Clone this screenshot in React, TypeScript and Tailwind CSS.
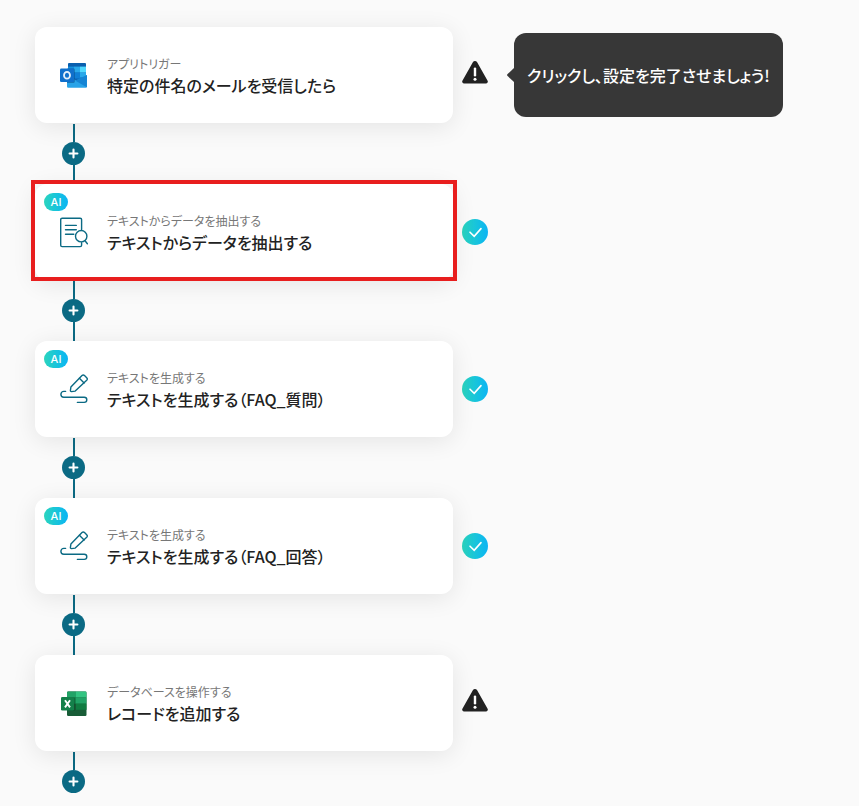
import React from 'react';

type IconName = 'outlook' | 'extract' | 'generate' | 'excel';

interface Step {
  id: number;
  icon: IconName;
  category: string;
  title: string;
  ai?: boolean;
  done?: boolean;
  selected?: boolean;
  hint?: string;
}

const steps: Step[] = [
  { id: 1, icon: 'outlook', category: 'アプリトリガー', title: '特定の件名のメールを受信したら', hint: 'クリックし、設定を完了させましょう!' },
  { id: 2, icon: 'extract', category: 'テキストからデータを抽出する', title: 'テキストからデータを抽出する', ai: true, done: true, selected: true },
  { id: 3, icon: 'generate', category: 'テキストを生成する', title: 'テキストを生成する（FAQ_質問）', ai: true, done: true },
  { id: 4, icon: 'generate', category: 'テキストを生成する', title: 'テキストを生成する（FAQ_回答）', ai: true, done: true },
  { id: 5, icon: 'excel', category: 'データベースを操作する', title: 'レコードを追加する' },
];

function OutlookIcon() {
  return (
    <svg width="28" height="28" viewBox="0 -0.6 28 28" className="shrink-0" aria-hidden="true">
      <rect x="8" y="1.5" width="18" height="17" rx="1" fill="#0a5fae" />
      <path d="M8 5h6v6H8z" fill="#1490df" />
      <path d="M14 5h6v6h-6z" fill="#28a8ea" />
      <path d="M20 5h6v6h-6z" fill="#50d9ff" />
      <path d="M8 11h6v6H8z" fill="#0364b8" />
      <path d="M14 11h6v6h-6z" fill="#0f7fd6" />
      <path d="M20 11h6v5h-6z" fill="#28a8ea" />
      <path d="M7 14l10.5 5.5L27 13.5V25a1.2 1.2 0 0 1-1.2 1.2H8.2A1.2 1.2 0 0 1 7 25z" fill="#28a3e8" />
      <path d="M15 19l11.8 6.6L27 13.5z" fill="#1584d4" />
      <path d="M7 7h6.5a1.4 1.4 0 0 1 1.4 1.4V20a1.4 1.4 0 0 1-1.4 1.4H7z" fill="#064a85" opacity=".5" />
      <rect x="0" y="7" width="14" height="13.5" rx="1.3" fill="#1070cc" />
      <ellipse cx="7" cy="13.7" rx="3" ry="3.4" fill="none" stroke="#e6f1fb" strokeWidth="1.8" />
    </svg>
  );
}

function ExcelIcon() {
  return (
    <svg width="28" height="28" viewBox="0 -1 28 28" className="shrink-0" aria-hidden="true">
      <rect x="7" y="1.5" width="19.5" height="24.5" rx="1.2" fill="#185c37" />
      <path d="M7 2.7a1.2 1.2 0 0 1 1.2-1.2H16v6H7z" fill="#21a366" />
      <path d="M16 1.5h9.3a1.2 1.2 0 0 1 1.2 1.2v4.8H16z" fill="#33c481" />
      <path d="M7 7.5h9v6.2H7z" fill="#169154" />
      <path d="M16 7.5h10.5v6.2H16z" fill="#21a366" />
      <path d="M16 13.7h10.5v6.1H16z" fill="#107c41" />
      <path d="M7 7.5h7a1.3 1.3 0 0 1 1.3 1.3v11a1.3 1.3 0 0 1-1.3 1.3H7z" fill="#0b4a29" opacity=".5" />
      <rect x="1" y="7" width="13" height="13.5" rx="1.3" fill="#14804a" />
      <path d="M5 10.2l5 7.2M10 10.2l-5 7.2" stroke="#fff" strokeWidth="1.9" fill="none" />
    </svg>
  );
}

function ExtractIcon() {
  return (
    <svg width="28" height="32" viewBox="0 -1.4 28 32" className="shrink-0" fill="none" stroke="#0b6a84" strokeWidth="1.4" strokeLinecap="round" aria-hidden="true">
      <path d="M21.6 12V2.2A1.4 1.4 0 0 0 20.2.8H2.1A1.4 1.4 0 0 0 .7 2.2v25.6a1.4 1.4 0 0 0 1.4 1.4h18.1a1.4 1.4 0 0 0 1.4-1.4v-2.4" />
      <path d="M5.5 8h10.8M5.5 12.3h10.8M5.5 16.8h8.3" />
      <circle cx="21.2" cy="18.8" r="5.7" />
      <path d="M25.2 23.6l2.2 2.8" />
    </svg>
  );
}

function GenerateIcon() {
  return (
    <svg width="28" height="30" viewBox="0 0 28 30" className="shrink-0" fill="none" stroke="#0b6a84" strokeWidth="1.4" strokeLinecap="round" strokeLinejoin="round" aria-hidden="true">
      <path d="M10.9 13L22 1.5a1.8 1.8 0 0 1 2.5 0l2.2 2.2a1.8 1.8 0 0 1 0 2.5L15.2 17.1l-3.8.5a.9.9 0 0 1-1-1z" />
      <path d="M19.4 4.3l4.7 4.6" />
      <path d="M5.6 17.4H3.8a2.9 2.9 0 0 0 0 5.8h20.4a2.6 2.6 0 0 1 0 5.2h-6.8" />
    </svg>
  );
}

function StepIcon({ name }: { name: IconName }) {
  if (name === 'outlook') return <OutlookIcon />;
  if (name === 'excel') return <ExcelIcon />;
  if (name === 'extract') return <ExtractIcon />;
  return <GenerateIcon />;
}

function Status({ done }: { done?: boolean }) {
  if (done) {
    return (
      <span className="flex size-[26px] shrink-0 items-center justify-center rounded-full bg-linear-to-r from-[#2bd4bd] to-[#0db4f4]">
        <svg width="26" height="26" viewBox="0 0 26 26" fill="none" role="img" aria-label="設定済み">
          <path d="M8 13.2l4.2 4.2 6.8-7.8" stroke="#fff" strokeWidth="1.6" strokeLinecap="round" />
        </svg>
      </span>
    );
  }
  return (
    <svg width="26" height="30" viewBox="0 0 26 30" className="shrink-0" role="img" aria-label="未設定">
      <path d="M11 2.1a2.4 2.4 0 0 1 4 0l10.6 18.6a1.9 1.9 0 0 1-1.7 2.8H2.1a1.9 1.9 0 0 1-1.7-2.8z" fill="#222" />
      <path d="M13 8.6v6.6" stroke="#fff" strokeWidth="2.4" strokeLinecap="round" />
      <circle cx="13" cy="19.2" r="1.5" fill="#fff" />
    </svg>
  );
}

function Connector({ last }: { last: boolean }) {
  return (
    <div className="ml-[27px] flex w-[23px] flex-col items-center pt-px">
      <div className="h-[18px] w-0.5 bg-[#0b6a84]" />
      <button
        type="button"
        aria-label="ステップを追加"
        className="flex size-[23px] items-center justify-center rounded-full bg-[#0b6a84]"
      >
        <svg width="11" height="11" viewBox="0 0 11 11" aria-hidden="true">
          <path d="M5.5 1.6v7.8M1.6 5.5h7.8" stroke="#fff" strokeWidth="2.1" strokeLinecap="round" />
        </svg>
      </button>
      {!last && <div className="h-[19px] w-0.5 bg-[#0b6a84]" />}
    </div>
  );
}

function StepCard({ step }: { step: Step }) {
  return (
    <div className="flex items-center gap-[9px]">
      <button
        type="button"
        className="relative flex h-24 min-w-0 basis-[418px] items-center gap-[19px] rounded-xl bg-white pl-[25px] pr-4 text-left shadow-[0_4px_24px_rgba(0,0,0,0.09)]"
      >
        {step.ai && (
          <span className="absolute left-[9px] top-[9px] flex h-[18px] w-6 items-center justify-center rounded-full bg-linear-to-r from-[#2bd4bd] to-[#0db4f4] font-[Inter,sans-serif] text-[11px] font-medium leading-none text-white">
            AI
          </span>
        )}
        <StepIcon name={step.icon} />
        <span className="flex min-w-0 flex-col">
          <span className="text-xs leading-5 text-[#777]">{step.category}</span>
          <span className="text-base font-medium leading-[22px] text-[#222]">{step.title}</span>
        </span>
        {step.selected && <span className="absolute -inset-x-1 -top-1 -bottom-px border-4 border-[#e81e1e]" />}
      </button>
      <Status done={step.done} />
      {step.hint && (
        <div role="tooltip" className="relative ml-[17px] flex h-[84px] items-center rounded-xl bg-[#373737] px-[13px] text-base font-medium text-white">
          <svg width="7" height="14" viewBox="0 0 7 14" className="absolute -left-[7px] top-[35px]" aria-hidden="true">
            <path d="M7 0v14L.6 8a1.4 1.4 0 0 1 0-2z" fill="#373737" />
          </svg>
          {step.hint}
        </div>
      )}
    </div>
  );
}

export default function App() {
  return (
    <main className="min-h-screen bg-[#fafafa] pl-[35px] pr-4 pt-[27px] font-['Noto_Sans_CJK_JP',sans-serif] [font-feature-settings:'palt']">
      <ol>
        {steps.map((step, i) => (
          <li key={step.id}>
            <StepCard step={step} />
            <Connector last={i === steps.length - 1} />
          </li>
        ))}
      </ol>
    </main>
  );
}
